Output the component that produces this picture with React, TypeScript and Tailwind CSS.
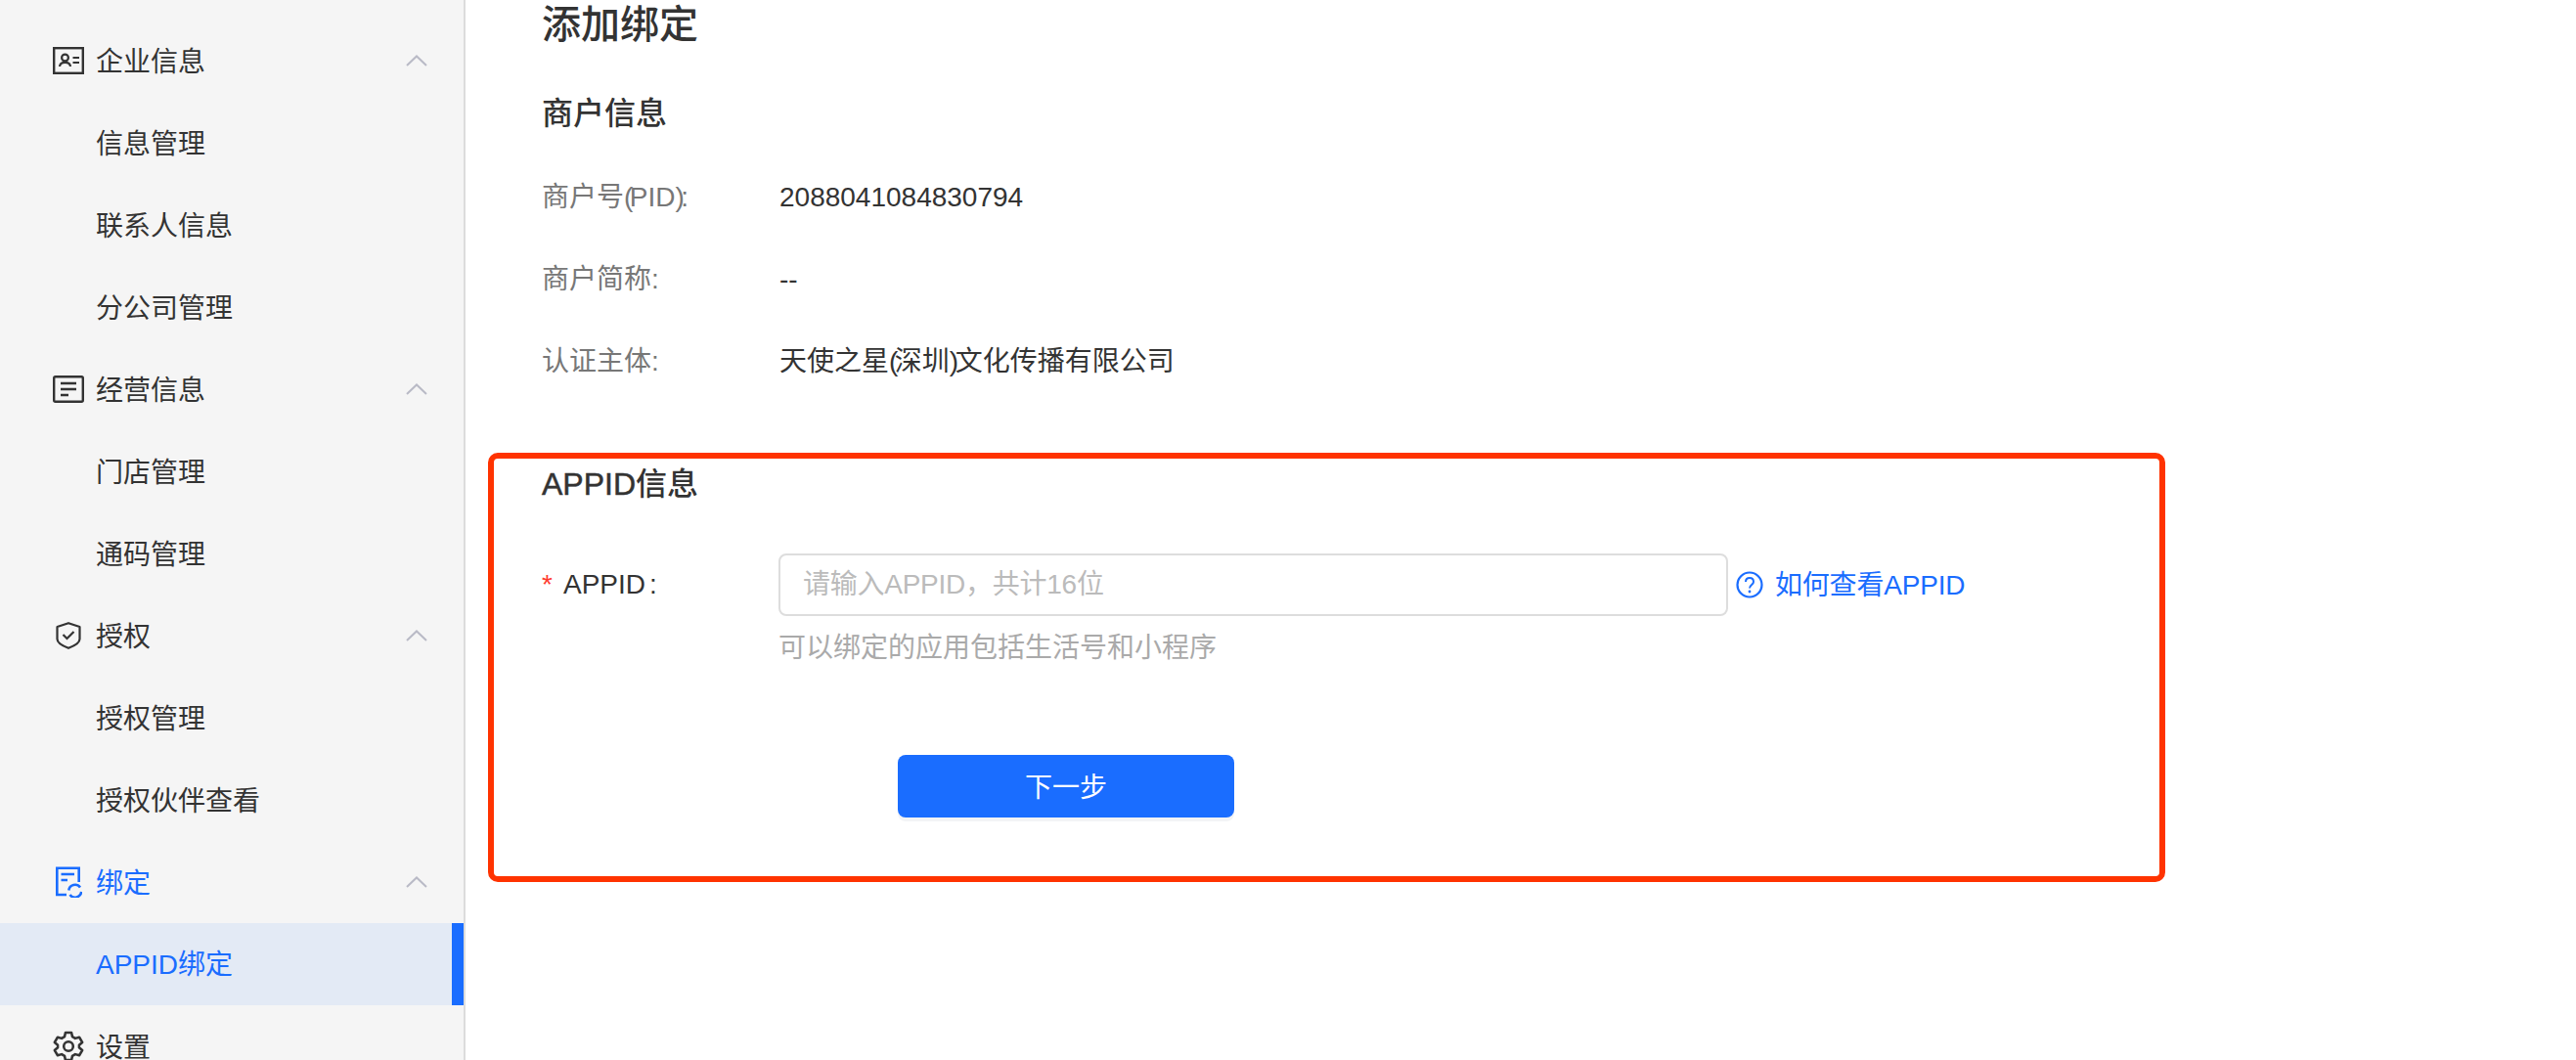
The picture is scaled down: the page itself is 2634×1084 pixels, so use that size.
import React from "react";

const font = '[font-family:"Liberation_Sans","Noto_Sans_CJK_SC",sans-serif]';

function Chevron() {
  return (
    <svg width="22" height="12" viewBox="0 0 22 12" fill="none" className="block">
      <path d="M1 11 L11 1.5 L21 11" stroke="#b9bac6" strokeWidth="2" />
    </svg>
  );
}

function CardIcon() {
  return (
    <svg width="32" height="28" viewBox="0 0 32 28" fill="none" stroke="#333" className="block">
      <rect x="1.2" y="1.2" width="29.6" height="25.6" strokeWidth="2.4" />
      <circle cx="12.5" cy="11" r="3.4" strokeWidth="2.2" />
      <path d="M7 20 C7.5 14.5 17.5 14.5 18 20" strokeWidth="2.2" />
      <path d="M20.5 11 H27 M20.5 16 H27" strokeWidth="2" />
    </svg>
  );
}

function ListIcon() {
  return (
    <svg width="32" height="28" viewBox="0 0 32 28" fill="none" stroke="#333" className="block">
      <rect x="1.2" y="1.2" width="29.6" height="25.6" rx="1.5" strokeWidth="2.4" />
      <path d="M8 8 H24 M8 14 H24 M8 20 H16" strokeWidth="2.4" />
    </svg>
  );
}

function ShieldIcon() {
  return (
    <svg width="26" height="28" viewBox="0 0 26 28" fill="none" stroke="#333" className="block">
      <path d="M13 1.2 L24.5 5 V17.5 C24.5 21 19 24.5 13 26.8 C7 24.5 1.5 21 1.5 17.5 V5 Z" strokeWidth="2.2" strokeLinejoin="round" />
      <path d="M7.5 13 L11.5 17 L18.5 10" strokeWidth="2.2" />
    </svg>
  );
}

function BindIcon() {
  return (
    <svg width="28" height="32" viewBox="0 0 28 32" fill="none" stroke="#1a6dff" className="block">
      <path d="M12 29 H2.3 V1.8 H24.7 V16" strokeWidth="2.6" />
      <path d="M6.5 8 H20 M6.5 14 H13" strokeWidth="2.6" />
      <path d="M14.3 24.5 A6.5 6.5 0 0 1 26 21.5" strokeWidth="2.6" />
      <path d="M27.2 26 A6.5 6.5 0 0 1 15.5 29" strokeWidth="2.6" />
    </svg>
  );
}

function GearIcon() {
  return (
    <svg width="32" height="32" viewBox="0 0 24 24" fill="none" stroke="#333" strokeWidth="1.9" strokeLinejoin="round" className="block">
      <path d="M9.7 1.5 H14.3 L15 4.6 L17.2 5.9 L20.3 5 L22.6 9 L20.2 11.1 V12.9 L22.6 15 L20.3 19 L17.2 18.1 L15 19.4 L14.3 22.5 H9.7 L9 19.4 L6.8 18.1 L3.7 19 L1.4 15 L3.8 12.9 V11.1 L1.4 9 L3.7 5 L6.8 5.9 L9 4.6 Z" />
      <circle cx="12" cy="12" r="3.6" />
    </svg>
  );
}

function HelpIcon() {
  return (
    <svg width="28" height="28" viewBox="0 0 28 28" fill="none" className="block">
      <circle cx="14" cy="14" r="12.5" stroke="#1a6dff" strokeWidth="2.2" />
      <path d="M10 11 C10 5.8 18 5.8 18 11 C18 14 14 14 14 17.5" stroke="#1a6dff" strokeWidth="2" />
      <circle cx="14" cy="21" r="1.4" fill="#1a6dff" />
    </svg>
  );
}

function GroupRow({ icon, label, active }: { icon: React.ReactNode; label: string; active?: boolean }) {
  return (
    <div className="flex h-[84px] shrink-0 items-center pl-[54px] pr-[37px]">
      <span className="flex w-[32px] justify-center">{icon}</span>
      <span className={`ml-[12px] h-[84px] flex-1 pt-[2px] text-[28px] leading-[84px] ${active ? "text-[#1a6dff]" : "text-[#333333]"}`}>{label}</span>
      {label !== "设置" && <Chevron />}
    </div>
  );
}

function SubRow({ label }: { label: string }) {
  return <div className="h-[84px] shrink-0 pt-[2px] pl-[98px] text-[28px] leading-[84px] text-[#333333]">{label}</div>;
}

function Paren({ c }: { c: string }) {
  return <span className="tracking-[-3.5px]">{c}</span>;
}

function InfoRow({ label, value }: { label: React.ReactNode; value: React.ReactNode }) {
  return (
    <div className="flex h-[84px] items-center text-[28px]">
      <span className="w-[243px] text-[#777777]">{label}</span>
      <span className="text-[#333333]">{value}</span>
    </div>
  );
}

export default function App() {
  return (
    <div className={`relative flex h-[1084px] w-[2634px] overflow-hidden bg-white ${font}`}>
      <aside className="flex h-full w-[476px] shrink-0 flex-col border-r-2 border-[#dcdcdc] bg-[#f5f5f5] pt-[20px]">
        <GroupRow icon={<CardIcon />} label="企业信息" />
        <SubRow label="信息管理" />
        <SubRow label="联系人信息" />
        <SubRow label="分公司管理" />
        <GroupRow icon={<ListIcon />} label="经营信息" />
        <SubRow label="门店管理" />
        <SubRow label="通码管理" />
        <GroupRow icon={<ShieldIcon />} label="授权" />
        <SubRow label="授权管理" />
        <SubRow label="授权伙伴查看" />
        <GroupRow icon={<BindIcon />} label="绑定" active />
        <div className="flex h-[84px] shrink-0 items-center justify-between bg-[#e3eaf5] pl-[98px]">
          <span className="pt-[2px] text-[28px] text-[#1a6dff]">APPID绑定</span>
          <span className="h-full w-[12px] bg-[#1a6dff]" />
        </div>
        <GroupRow icon={<GearIcon />} label="设置" />
      </aside>

      <main className="flex-1 pl-[78px]">
        <h1 className="mt-[2px] h-[46px] text-[40px] leading-[46px] font-medium text-[#333333]">添加绑定</h1>
        <h2 className="mt-[45px] h-[46px] text-[32px] leading-[46px] font-medium text-[#333333]">商户信息</h2>
        <div className="mt-[21px]">
          <InfoRow label={<>商户号<Paren c="(" />PID<Paren c=")" />:</>} value="2088041084830794" />
          <InfoRow label="商户简称:" value="--" />
          <InfoRow label="认证主体:" value={<>天使之星<Paren c="(" />深圳<Paren c=")" />文化传播有限公司</>} />
        </div>
        <h2 className="mt-[60px] h-[46px] text-[32px] leading-[46px] font-medium text-[#333333]">
          <span className="[-webkit-text-stroke:0.5px_#333333]">APPID</span>信息
        </h2>
        <div className="mt-[48px] flex items-start">
          <div className="flex h-[64px] w-[242px] items-center text-[28px] text-[#333333]">
            <span className="w-[22px] text-[#ff3b30]">*</span>
            <span>APPID</span>
            <span className="ml-[4px]">:</span>
          </div>
          <div>
            <div className="flex items-center">
              <input
                readOnly
                placeholder="请输入APPID，共计16位"
                className="h-[64px] w-[971px] rounded-[8px] border-2 border-[#dddddd] bg-white pl-[23px] text-[28px] tracking-[-0.25px] outline-none placeholder:text-[#bbbbbb]"
              />
              <span className="ml-[8px]"><HelpIcon /></span>
              <span className="ml-[12px] pt-[2px] text-[28px] tracking-[-0.2px] text-[#1a6dff]">如何查看APPID</span>
            </div>
            <p className="mt-[13px] text-[28px] leading-[40px] text-[#aaaaaa]">可以绑定的应用包括生活号和小程序</p>
          </div>
        </div>
        <button className="mt-[89px] ml-[364px] flex h-[64px] w-[344px] items-center justify-center rounded-[8px] bg-[#1a6dff] pt-[3px] text-[28px] text-white shadow-[0_4px_0_#f3f4f6]">
          下一步
        </button>
      </main>

      <div className="pointer-events-none absolute top-[463px] left-[499px] h-[439px] w-[1715px] rounded-[10px] border-[6px] border-[#ff3300]" />
    </div>
  );
}
